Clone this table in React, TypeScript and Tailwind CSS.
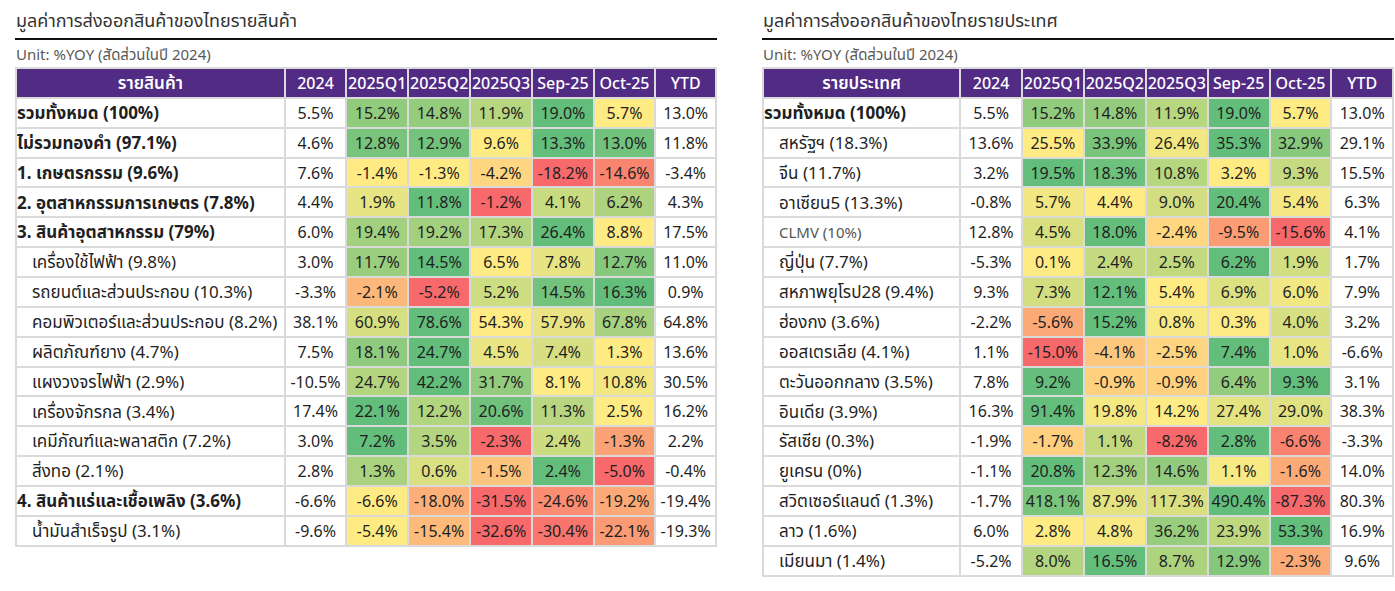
import React from 'react';

type Row = {
    label: string;
    bold?: boolean;
    indent?: boolean;
    muted?: boolean;
    y24: number;
    vals: number[];
    ytd: number;
    lo?: number;
};

const RED = [248, 105, 107];
const YELLOW = [255, 235, 132];
const GREEN = [99, 190, 123];

function mix(a: number[], b: number[], t: number) {
    const c = a.map((x, i) => Math.round(x + (b[i] - x) * t));
    return `rgb(${c[0]}, ${c[1]}, ${c[2]})`;
}

// Excel-style 3 colour scale per row: lowest = red, 0 = yellow, highest = green
function heat(v: number, row: Row) {
    const lo = row.lo ?? Math.min(...row.vals);
    const hi = Math.max(...row.vals);
    const mid = Math.min(Math.max(0, lo), hi);
    if (v <= mid) {
        const t = mid === lo ? 1 : (v - lo) / (mid - lo);
        return mix(RED, YELLOW, t);
    }
    const t = hi === mid ? 1 : (v - mid) / (hi - mid);
    return mix(YELLOW, GREEN, t);
}

const fmt = (n: number) => `${n.toFixed(1)}%`;

const productRows: Row[] = [
    { label: 'รวมทั้งหมด (100%)', bold: true, y24: 5.5, vals: [15.2, 14.8, 11.9, 19.0, 5.7], ytd: 13.0 },
    { label: 'ไม่รวมทองคำ (97.1%)', bold: true, y24: 4.6, vals: [12.8, 12.9, 9.6, 13.3, 13.0], ytd: 11.8 },
    { label: '1. เกษตรกรรม (9.6%)', bold: true, y24: 7.6, vals: [-1.4, -1.3, -4.2, -18.2, -14.6], ytd: -3.4 },
    { label: '2. อุตสาหกรรมการเกษตร (7.8%)', bold: true, y24: 4.4, vals: [1.9, 11.8, -1.2, 4.1, 6.2], ytd: 4.3 },
    { label: '3. สินค้าอุตสาหกรรม (79%)', bold: true, y24: 6.0, vals: [19.4, 19.2, 17.3, 26.4, 8.8], ytd: 17.5 },
    { label: 'เครื่องใช้ไฟฟ้า (9.8%)', indent: true, y24: 3.0, vals: [11.7, 14.5, 6.5, 7.8, 12.7], ytd: 11.0 },
    { label: 'รถยนต์และส่วนประกอบ (10.3%)', indent: true, y24: -3.3, vals: [-2.1, -5.2, 5.2, 14.5, 16.3], ytd: 0.9 },
    { label: 'คอมพิวเตอร์และส่วนประกอบ (8.2%)', indent: true, y24: 38.1, vals: [60.9, 78.6, 54.3, 57.9, 67.8], ytd: 64.8 },
    { label: 'ผลิตภัณฑ์ยาง (4.7%)', indent: true, y24: 7.5, vals: [18.1, 24.7, 4.5, 7.4, 1.3], ytd: 13.6 },
    { label: 'แผงวงจรไฟฟ้า (2.9%)', indent: true, y24: -10.5, vals: [24.7, 42.2, 31.7, 8.1, 10.8], ytd: 30.5 },
    { label: 'เครื่องจักรกล (3.4%)', indent: true, y24: 17.4, vals: [22.1, 12.2, 20.6, 11.3, 2.5], ytd: 16.2 },
    { label: 'เคมีภัณฑ์และพลาสติก (7.2%)', indent: true, y24: 3.0, vals: [7.2, 3.5, -2.3, 2.4, -1.3], ytd: 2.2 },
    { label: 'สิ่งทอ (2.1%)', indent: true, y24: 2.8, vals: [1.3, 0.6, -1.5, 2.4, -5.0], ytd: -0.4 },
    { label: '4. สินค้าแร่และเชื้อเพลิง (3.6%)', bold: true, y24: -6.6, vals: [-6.6, -18.0, -31.5, -24.6, -19.2], ytd: -19.4 },
    { label: 'น้ำมันสำเร็จรูป (3.1%)', indent: true, y24: -9.6, vals: [-5.4, -15.4, -32.6, -30.4, -22.1], ytd: -19.3 },
];

const countryRows: Row[] = [
    { label: 'รวมทั้งหมด (100%)', bold: true, y24: 5.5, vals: [15.2, 14.8, 11.9, 19.0, 5.7], ytd: 13.0 },
    { label: 'สหรัฐฯ (18.3%)', indent: true, y24: 13.6, vals: [25.5, 33.9, 26.4, 35.3, 32.9], ytd: 29.1 },
    { label: 'จีน (11.7%)', indent: true, y24: 3.2, vals: [19.5, 18.3, 10.8, 3.2, 9.3], ytd: 15.5 },
    { label: 'อาเซียน5 (13.3%)', indent: true, y24: -0.8, vals: [5.7, 4.4, 9.0, 20.4, 5.4], ytd: 6.3 },
    { label: 'CLMV (10%)', indent: true, muted: true, y24: 12.8, vals: [4.5, 18.0, -2.4, -9.5, -15.6], ytd: 4.1 },
    { label: 'ญี่ปุ่น (7.7%)', indent: true, y24: -5.3, vals: [0.1, 2.4, 2.5, 6.2, 1.9], ytd: 1.7 },
    { label: 'สหภาพยุโรป28 (9.4%)', indent: true, y24: 9.3, vals: [7.3, 12.1, 5.4, 6.9, 6.0], ytd: 7.9 },
    { label: 'ฮ่องกง (3.6%)', indent: true, y24: -2.2, vals: [-5.6, 15.2, 0.8, 0.3, 4.0], ytd: 3.2, lo: -11 },
    { label: 'ออสเตรเลีย (4.1%)', indent: true, y24: 1.1, vals: [-15.0, -4.1, -2.5, 7.4, 1.0], ytd: -6.6 },
    { label: 'ตะวันออกกลาง (3.5%)', indent: true, y24: 7.8, vals: [9.2, -0.9, -0.9, 6.4, 9.3], ytd: 3.1, lo: -4.5 },
    { label: 'อินเดีย (3.9%)', indent: true, y24: 16.3, vals: [91.4, 19.8, 14.2, 27.4, 29.0], ytd: 38.3 },
    { label: 'รัสเซีย (0.3%)', indent: true, y24: -1.9, vals: [-1.7, 1.1, -8.2, 2.8, -6.6], ytd: -3.3 },
    { label: 'ยูเครน (0%)', indent: true, y24: -1.1, vals: [20.8, 12.3, 14.6, 1.1, -1.6], ytd: 14.0, lo: -3.2 },
    { label: 'สวิตเซอร์แลนด์ (1.3%)', indent: true, y24: -1.7, vals: [418.1, 87.9, 117.3, 490.4, -87.3], ytd: 80.3 },
    { label: 'ลาว (1.6%)', indent: true, y24: 6.0, vals: [2.8, 4.8, 36.2, 23.9, 53.3], ytd: 16.9 },
    { label: 'เมียนมา (1.4%)', indent: true, y24: -5.2, vals: [8.0, 16.5, 8.7, 12.9, -2.3], ytd: 9.6, lo: -4.6 },
];

const periods = ['2025Q1', '2025Q2', '2025Q3', 'Sep-25', 'Oct-25'];

function HeatTable({ head, rows, nameWidth, ytdWidth }: { head: string; rows: Row[]; nameWidth: string; ytdWidth: string }) {
    const cell = 'border-2 border-[#dadada] h-[29.87px] p-0 text-center whitespace-nowrap';
    return (
        <table className="table-fixed border-collapse text-[16px] text-[#1f1f1f]">
            <colgroup>
                <col className={nameWidth} />
                <col className="w-[62px]" />
                {periods.map((p) => (
                    <col key={p} className="w-[62px]" />
                ))}
                <col className={ytdWidth} />
            </colgroup>
            <thead>
                <tr className="bg-[#512b84] text-white">
                    <th className={`${cell} font-semibold text-[17px]`}>{head}</th>
                    <th className={`${cell} font-medium`}>2024</th>
                    {periods.map((p) => (
                        <th key={p} className={`${cell} font-medium`}>
                            {p}
                        </th>
                    ))}
                    <th className={`${cell} font-medium`}>YTD</th>
                </tr>
            </thead>
            <tbody>
                {rows.map((r) => (
                    <tr key={r.label}>
                        <td
                            className={`${cell} text-left ${r.bold ? 'font-bold pl-0' : 'pl-[15px]'} ${
                                r.muted ? 'text-[#555] text-[15px]' : 'text-[17px]'
                            }`}
                        >
                            {r.label}
                        </td>
                        <td className={cell}>{fmt(r.y24)}</td>
                        {r.vals.map((v, i) => (
                            <td key={i} className={cell} style={{ backgroundColor: heat(v, r) }}>
                                {fmt(v)}
                            </td>
                        ))}
                        <td className={cell}>{fmt(r.ytd)}</td>
                    </tr>
                ))}
            </tbody>
        </table>
    );
}

function Panel({ title, children, width }: { title: string; children: React.ReactNode; width: string }) {
    return (
        <section className={`${width} flex flex-col`}>
            <h2 className="text-[18px] leading-[22px] text-[#333] pl-px">{title}</h2>
            <div className="h-[2px] bg-[#111] mt-[7px]" />
            <p className="text-[15px] leading-[18px] text-[#595959] mt-[5px] pl-px">Unit: %YOY (สัดส่วนในปี 2024)</p>
            <div className="mt-[4px]">{children}</div>
        </section>
    );
}

export default function App() {
    return (
        <div className="w-[1395px] h-[591px] bg-white flex gap-[45px] pl-[15px] pt-[9px] font-['Noto_Sans','Noto_Sans_Thai',sans-serif] overflow-hidden">
            <Panel title="มูลค่าการส่งออกสินค้าของไทยรายสินค้า" width="w-[702px]">
                <HeatTable head="รายสินค้า" rows={productRows} nameWidth="w-[269px]" ytdWidth="w-[61px]" />
            </Panel>
            <Panel title="มูลค่าการส่งออกสินค้าของไทยรายประเทศ" width="w-[632px]">
                <HeatTable head="รายประเทศ" rows={countryRows} nameWidth="w-[198px]" ytdWidth="w-[62px]" />
            </Panel>
        </div>
    );
}
